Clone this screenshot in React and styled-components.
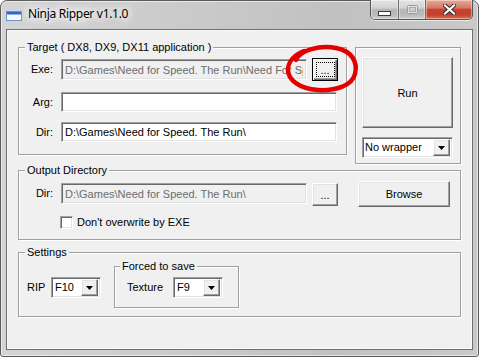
import React from "react";
import styled, { createGlobalStyle, css } from "styled-components";

const GlobalStyle = createGlobalStyle`
  html, body { margin: 0; padding: 0; background: #ffffff; }
  body { font-family: "Liberation Sans", Arial, sans-serif; font-size: 11px; color: #000; }
  * { box-sizing: border-box; }
`;

const raised = css`
  border: 1px solid;
  border-color: #ffffff #696969 #696969 #ffffff;
  box-shadow: inset -1px -1px 0 #a0a0a0, inset 1px 1px 0 #e3e3e3;
  background: #f0f0f0;
`;

const sunken = css`
  border: 1px solid;
  border-color: #a0a0a0 #ffffff #ffffff #a0a0a0;
  box-shadow: inset 1px 1px 0 #696969, inset -1px -1px 0 #e3e3e3;
`;

const Window = styled.div`
  position: relative;
  width: 479px;
  height: 357px;
  border: 1px solid #5b5b5b;
  border-radius: 7px 7px 3px 3px;
  background: linear-gradient(to right, #d4d4d4 0%, #cacaca 40%, #c1c1c1 70%, #c9c9c9 100%);
  box-shadow: inset 0 0 0 1px rgba(255, 255, 255, 0.55);
  padding: 0 5px 6px;
  display: flex;
  flex-direction: column;
`;

const TitleBar = styled.div`
  height: 28px;
  flex: none;
  display: flex;
  align-items: flex-start;
`;

const AppIcon = styled.svg`
  margin-top: 10px;
  flex: none;
`;

const Title = styled.div`
  margin: 5px 0 0 6px;
  font-family: "Noto Sans", "Open Sans", sans-serif;
  font-size: 12px;
  line-height: 16px;
  letter-spacing: -0.3px;
  color: #000;
  text-shadow: 0 0 6px #fff, 0 0 10px #fff, 0 0 14px #fff, 0 0 14px #fff;
`;

const CaptionGroup = styled.div`
  margin: -1px 0 0 auto;
  height: 20px;
  display: flex;
  border: 1px solid #565656;
  border-top: none;
  border-radius: 0 0 5px 5px;
  overflow: hidden;
  box-shadow: 0 1px 0 rgba(255, 255, 255, 0.6);
`;

const CaptionButton = styled.div`
  width: ${(p) => p.$w}px;
  display: flex;
  justify-content: center;
  align-items: ${(p) => (p.$low ? "flex-end" : "center")};
  padding-bottom: ${(p) => (p.$low ? 3 : 0)}px;
  border-left: ${(p) => (p.$first ? "none" : "1px solid #6b6b6b")};
  background: ${(p) =>
    p.$close
      ? "linear-gradient(#e7a999 0%, #d67763 42%, #c6442f 50%, #c3412b 78%, #d8755b 100%)"
      : "linear-gradient(#e4e4e4 0%, #d2d2d2 42%, #b7b7b7 50%, #bababa 78%, #cecece 100%)"};
  box-shadow: inset 0 0 0 1px rgba(255, 255, 255, 0.4);
`;

const Client = styled.div`
  flex: 1;
  width: 467px;
  border: 1px solid #6f6f6f;
  box-shadow: inset 0 0 0 1px #fafafa;
  background: #f0f0f0;
  padding: 11px 11px 0;
  display: flex;
  flex-direction: column;
`;

const TopRow = styled.div`
  display: flex;
  align-items: flex-start;
  gap: 8px;
`;

const Group = styled.fieldset`
  margin: ${(p) => p.$mt || 0}px 0 0 ${(p) => p.$ml || 0}px;
  padding: 0;
  min-width: 0;
  flex: none;
  width: ${(p) => p.$w}px;
  height: ${(p) => p.$h}px;
  border: 1px solid #a0a0a0;
  box-shadow: 1px 1px 0 #ffffff, inset 1px 1px 0 #ffffff;
`;

const Legend = styled.legend`
  margin-left: ${(p) => p.$ml ?? 6}px;
  padding: 0 2px;
  height: 13px;
  line-height: 13px;
  font-size: 11px;
  background: #f0f0f0;
`;

const GroupBody = styled.div`
  padding: ${(p) => p.$pad};
  display: flex;
  flex-direction: ${(p) => (p.$row ? "row" : "column")};
  align-items: flex-start;
`;

const FieldRow = styled.div`
  display: flex;
  align-items: flex-start;
  margin-top: ${(p) => p.$mt || 0}px;
  padding-left: ${(p) => p.$pl || 0}px;
`;

const FieldLabel = styled.label`
  width: ${(p) => p.$w}px;
  margin-right: ${(p) => p.$mr || 0}px;
  margin-top: ${(p) => p.$mt || 0}px;
  line-height: ${(p) => p.$lh || 21}px;
  text-align: ${(p) => p.$align || "left"};
  white-space: nowrap;
  flex: none;
`;

const TextBox = styled.input`
  ${sunken};
  width: ${(p) => p.$w}px;
  height: ${(p) => p.$h}px;
  margin: ${(p) => p.$mt || 0}px 0 0 0;
  padding: 0 3px;
  font: inherit;
  font-size: 11px;
  outline: none;
  background: ${(p) => (p.$off ? "#f0f0f0" : "#ffffff")};
  color: ${(p) => (p.$off ? "#6d6d6d" : "#000")};
  -webkit-text-fill-color: ${(p) => (p.$off ? "#6d6d6d" : "#000")};
  flex: none;
`;

const PushButton = styled.button`
  ${raised};
  position: relative;
  width: ${(p) => p.$w}px;
  height: ${(p) => p.$h}px;
  margin: ${(p) => p.$mt || 0}px 0 0 ${(p) => p.$ml || 0}px;
  padding: 0;
  font: inherit;
  font-size: 11px;
  color: #000;
  flex: none;
  ${(p) =>
    p.$focus &&
    css`
      border: 1px solid #000;
      box-shadow: inset 1px 1px 0 #fff, inset -1px -1px 0 #696969, inset -2px -2px 0 #a0a0a0;
      &::after {
        content: "";
        position: absolute;
        left: 3px;
        right: 2px;
        top: 3px;
        bottom: 3px;
        border: 1px dotted #000;
      }
    `}
`;

const Combo = styled.div`
  ${sunken};
  width: ${(p) => p.$w}px;
  height: 21px;
  margin-top: ${(p) => p.$mt || 0}px;
  background: #fff;
  display: flex;
  align-items: center;
  padding: 2px 2px 2px ${(p) => p.$tp ?? 3}px;
  flex: none;
`;

const ComboText = styled.span`
  flex: 1;
  line-height: 15px;
  white-space: nowrap;
  overflow: hidden;
`;

const DropButton = styled.div`
  ${raised};
  width: 17px;
  height: 17px;
  display: flex;
  align-items: center;
  justify-content: center;
  flex: none;
`;

const CheckBox = styled.div`
  ${sunken};
  width: 13px;
  height: 13px;
  background: #fff;
  flex: none;
`;

const CheckRow = styled.div`
  display: flex;
  align-items: center;
  margin-top: 9px;
  padding-left: 41px;
  gap: 4px;
  line-height: 13px;
`;

const Annotation = styled.svg`
  position: absolute;
  left: -1px;
  top: -1px;
  pointer-events: none;
`;

function ComboBox({ w, value, mt, tp }) {
  return (
    <Combo $w={w} $mt={mt} $tp={tp}>
      <ComboText>{value}</ComboText>
      <DropButton>
        <svg width="7" height="4" viewBox="0 0 7 4">
          <polygon points="0,0 7,0 3.5,4" fill="#000" />
        </svg>
      </DropButton>
    </Combo>
  );
}

export default function App() {
  return (
    <>
      <GlobalStyle />
      <Window>
        <TitleBar>
          <AppIcon width="16" height="10" viewBox="0 0 16 10">
            <rect x="0.5" y="0.5" width="15" height="9" fill="#f4f7fc" stroke="#6b8fcf" />
            <rect x="1" y="1" width="14" height="2.5" fill="#2f64c6" />
          </AppIcon>
          <Title>Ninja Ripper v1.1.0</Title>
          <CaptionGroup>
            <CaptionButton $w={27} $first $low>
              <svg width="13" height="5" viewBox="0 0 13 5">
                <rect x="0.5" y="0.5" width="12" height="4" fill="#ffffff" stroke="#3a3a3a" />
              </svg>
            </CaptionButton>
            <CaptionButton $w={27}>
              <svg width="11" height="9" viewBox="0 0 11 9">
                <rect x="0.5" y="0.5" width="10" height="8" rx="1" fill="#e2e2e2" stroke="#9a9a9a" />
                <rect x="2.5" y="2.5" width="6" height="4" fill="#cfcfcf" stroke="#a9a9a9" />
              </svg>
            </CaptionButton>
            <CaptionButton $w={47} $close>
              <svg width="13" height="11" viewBox="0 0 13 11">
                <path d="M2 1.5 L11 9.5 M11 1.5 L2 9.5" stroke="#3a2a28" strokeWidth="4.2" strokeLinecap="square" />
                <path d="M2 1.5 L11 9.5 M11 1.5 L2 9.5" stroke="#ffffff" strokeWidth="2.2" strokeLinecap="square" />
              </svg>
            </CaptionButton>
          </CaptionGroup>
        </TitleBar>

        <Client>
          <TopRow>
            <Group $w={329} $h={114}>
              <Legend>Target ( DX8, DX9, DX11 application )</Legend>
              <GroupBody $pad="4px 0 0 0">
                <FieldRow>
                  <FieldLabel $w={34} $mr={8} $mt={1} $align="right">Exe:</FieldLabel>
                  <TextBox $w={246} $h={21} $mt={1} $off readOnly value="D:\Games\Need for Speed. The Run\Need For Speed The Run.exe" />
                  <PushButton $w={26} $h={23} $ml={5} $focus>...</PushButton>
                </FieldRow>
                <FieldRow $mt={11}>
                  <FieldLabel $w={34} $mr={8} $lh={20} $align="right">Arg:</FieldLabel>
                  <TextBox $w={276} $h={20} readOnly value="" />
                </FieldRow>
                <FieldRow $mt={10}>
                  <FieldLabel $w={34} $mr={8} $lh={20} $align="right">Dir:</FieldLabel>
                  <TextBox $w={276} $h={20} readOnly value="D:\Games\Need for Speed. The Run\" />
                </FieldRow>
              </GroupBody>
            </Group>

            <Group $w={106} $h={117} $mt={6}>
              <GroupBody $pad="9px 0 0 6px">
                <PushButton $w={91} $h={71}>Run</PushButton>
                <ComboBox w={91} value="No wrapper" mt={9} tp={2} />
              </GroupBody>
            </Group>
          </TopRow>

          <Group $w={443} $h={76}>
            <Legend>Output Directory</Legend>
            <GroupBody $pad="4px 0 0 0">
              <FieldRow>
                <FieldLabel $w={34} $mr={8} $mt={2} $align="right">Dir:</FieldLabel>
                <TextBox $w={246} $h={21} $mt={2} $off readOnly value="D:\Games\Need for Speed. The Run\" />
                <PushButton $w={26} $h={23} $ml={5} $mt={2}>...</PushButton>
                <PushButton $w={92} $h={26} $ml={20}>Browse</PushButton>
              </FieldRow>
              <CheckRow>
                <CheckBox />
                <span>Don't overwrite by EXE</span>
              </CheckRow>
            </GroupBody>
          </Group>

          <Group $w={443} $h={71} $mt={6}>
            <Legend>Settings</Legend>
            <GroupBody $pad="0 0 0 8px" $row>
              <FieldLabel $w={24} $mt={18}>RIP</FieldLabel>
              <ComboBox w={50} value="F10" mt={18} />
              <Group $w={125} $h={48} $mt={1} $ml={13}>
                <Legend $ml={5}>Forced to save</Legend>
                <GroupBody $pad="4px 0 0 12px" $row>
                  <FieldLabel $w={46}>Texture</FieldLabel>
                  <ComboBox w={50} value="F9" />
                </GroupBody>
              </Group>
            </GroupBody>
          </Group>
        </Client>

        <Annotation width="479" height="357" viewBox="0 0 479 357">
          <path
            d="M296 60 C300 50, 320 45, 336 48 C352 51, 358 62, 355 74 C352 86, 335 91, 318 90 C300 89, 288 80, 288 70 C288 62, 294 55, 304 51"
            fill="none"
            stroke="#e30000"
            strokeWidth="4.5"
            strokeLinecap="round"
          />
        </Annotation>
      </Window>
    </>
  );
}
